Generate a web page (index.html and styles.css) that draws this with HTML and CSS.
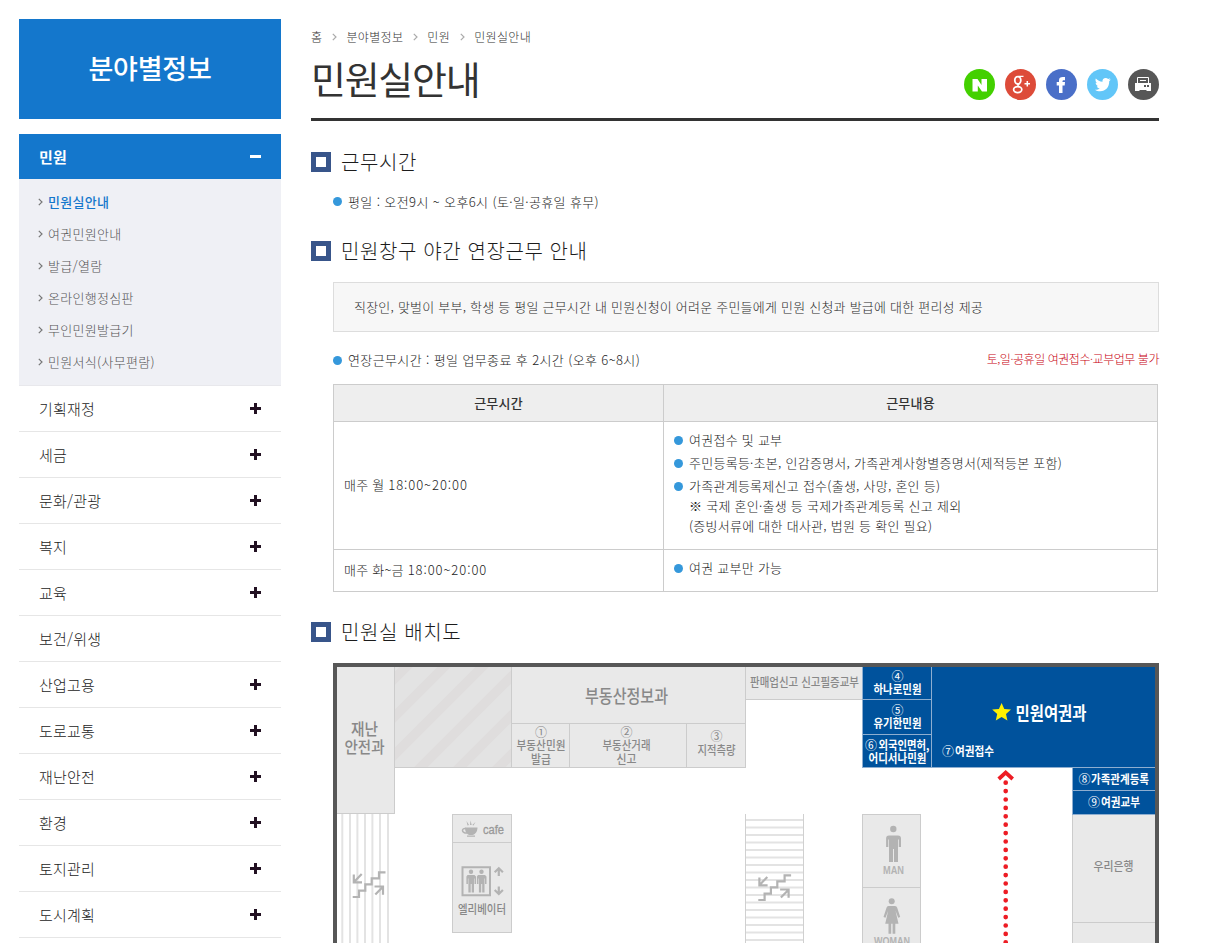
FILE: index.html
```html
<!DOCTYPE html>
<html lang="ko">
<head>
<meta charset="utf-8">
<title>민원실안내</title>
<link rel="stylesheet" href="styles.css">
</head>
<body>
<div class="page">
  <aside class="side">
    <h2 class="side-title">분야별정보</h2>
    <div class="side-current"><span>민원</span><i class="sign minus"></i></div>
    <ul class="sub">
      <li class="on"><svg class="chev" viewBox="0 0 5 8"><path d="M.8 .8L4 4 .8 7.2"/></svg>민원실안내</li>
      <li><svg class="chev" viewBox="0 0 5 8"><path d="M.8 .8L4 4 .8 7.2"/></svg>여권민원안내</li>
      <li><svg class="chev" viewBox="0 0 5 8"><path d="M.8 .8L4 4 .8 7.2"/></svg>발급/열람</li>
      <li><svg class="chev" viewBox="0 0 5 8"><path d="M.8 .8L4 4 .8 7.2"/></svg>온라인행정심판</li>
      <li><svg class="chev" viewBox="0 0 5 8"><path d="M.8 .8L4 4 .8 7.2"/></svg>무인민원발급기</li>
      <li><svg class="chev" viewBox="0 0 5 8"><path d="M.8 .8L4 4 .8 7.2"/></svg>민원서식(사무편람)</li>
    </ul>
    <ul class="menu">
      <li><span>기획재정</span><i class="sign plus"></i></li>
      <li><span>세금</span><i class="sign plus"></i></li>
      <li><span>문화/관광</span><i class="sign plus"></i></li>
      <li><span>복지</span><i class="sign plus"></i></li>
      <li><span>교육</span><i class="sign plus"></i></li>
      <li><span>보건/위생</span></li>
      <li><span>산업고용</span><i class="sign plus"></i></li>
      <li><span>도로교통</span><i class="sign plus"></i></li>
      <li><span>재난안전</span><i class="sign plus"></i></li>
      <li><span>환경</span><i class="sign plus"></i></li>
      <li><span>토지관리</span><i class="sign plus"></i></li>
      <li><span>도시계획</span><i class="sign plus"></i></li>
    </ul>
  </aside>

  <main class="main">
    <nav class="crumbs">
      <span>홈</span><svg class="sep" viewBox="0 0 5 8"><path d="M.8 .8L4 4 .8 7.2"/></svg>
      <span>분야별정보</span><svg class="sep" viewBox="0 0 5 8"><path d="M.8 .8L4 4 .8 7.2"/></svg>
      <span>민원</span><svg class="sep" viewBox="0 0 5 8"><path d="M.8 .8L4 4 .8 7.2"/></svg>
      <span>민원실안내</span>
    </nav>
    <header class="head">
      <h1>민원실안내</h1>
      <div class="share">
        <svg viewBox="0 0 31 31"><circle cx="15.500" cy="15.500" r="15.500" fill="#43d000"/><path fill="#fff" d="M8.500 10h5l4 6V10h5.500v12.500h-5l-4.200-6v6H8.500z"/></svg>
        <svg viewBox="0 0 31 31"><circle cx="15.500" cy="15.500" r="15.500" fill="#dd4b39"/><g fill="none" stroke="#fff"><ellipse cx="12.800" cy="11.300" rx="3" ry="3.700" stroke-width="1.800"/><path stroke-width="1.300" d="M13.500 7.400h5M14.500 14.800c-2.500 1.200-2 2.100 0 3"/><ellipse cx="12.700" cy="20.600" rx="4.100" ry="3" stroke-width="1.700"/><path stroke-width="1.500" d="M22.300 12v5.500M19.500 14.800h5.500"/></g></svg>
        <svg viewBox="0 0 31 31"><circle cx="15.500" cy="15.500" r="15.500" fill="#4a6fc8"/><path fill="#fff" d="M13 24v-7.500h-2.300V13H13v-1.600C13 9 14.400 8 16.800 8H19v3.200h-1.300c-.8 0-1.200.4-1.200 1.100V13H19l-.3 3.500h-2.200V24z"/></svg>
        <svg viewBox="0 0 31 31"><circle cx="15.500" cy="15.500" r="15.500" fill="#62c6f8"/><path fill="#fff" d="M8.800 9.500c1.900 2.100 4 3.100 6.700 3.300-.4-2.500 1.200-3.800 3.200-3.800 1 0 1.800.4 2.400 1l2.200-.8-1.300 1.800 1.900-.4-1.700 1.700c.2 5.700-3.600 10-8.900 10-2.200 0-3.900-.5-5.300-1.500 2 .1 3.400-.3 4.800-1.300-1.600-.2-2.500-1-3-2.300h1.400c-1.600-.6-2.500-1.800-2.600-3.400l1.500.4c-1.500-1.200-2-2.900-1.300-4.700z"/></svg>
        <svg viewBox="0 0 31 31"><circle cx="15.500" cy="15.500" r="15.500" fill="#575757"/><path fill="none" stroke="#fff" stroke-width="1" d="M9.500 14V8.500h11V14M12 11.500h6"/><path fill="#fff" d="M7 14h16v8h-4l-1-1h-6l-1 1H7z"/><path fill="#575757" d="M16 16h2v2h-2zM19 16h2v2h-2z"/></svg>
      </div>
    </header>

    <h3>근무시간</h3>
    <p class="dot line wide">평일 : 오전9시 ~ 오후6시 (토·일·공휴일 휴무)</p>

    <h3 class="second">민원창구 야간 연장근무 안내</h3>
    <div class="notice">직장인, 맞벌이 부부, 학생 등 평일 근무시간 내 민원신청이 어려운 주민들에게 민원 신청과 발급에 대한 편리성 제공</div>
    <div class="row">
      <p class="dot wide">연장근무시간 : 평일 업무종료 후 2시간 (오후 6~8시)</p>
      <p class="warn">토,일·공휴일 여권접수·교부업무 불가</p>
    </div>
    <table>
      <thead><tr><th class="when">근무시간</th><th>근무내용</th></tr></thead>
      <tbody>
        <tr class="tall"><td>매주 월 <span class="hours">18:00~20:00</span></td><td>
          <ul class="work">
            <li class="dot a">여권접수 및 교부</li>
            <li class="dot b">주민등록등·초본, 인감증명서, 가족관계사항별증명서(제적등본 포함)</li>
            <li class="dot c">가족관계등록제신고 접수(출생, 사망, 혼인 등)<br>※ 국제 혼인·출생 등 국제가족관계등록 신고 제외<br>(증빙서류에 대한 대사관, 법원 등 확인 필요)</li>
          </ul></td></tr>
        <tr class="short"><td>매주 화~금 <span class="hours">18:00~20:00</span></td><td><ul class="work"><li class="dot">여권 교부만 가능</li></ul></td></tr>
      </tbody>
    </table>

    <h3 class="third">민원실 배치도</h3>
    <svg class="map" viewBox="333 663 826 280">
      <defs>
        <clipPath id="hatch"><rect x="395" y="667" width="116" height="100"/></clipPath>
        <g id="stairs" fill="none" stroke="#b3b3b3" stroke-width="2.200">
          <path d="M352.700 897H359V890.700H365.300V884.300H371.700V878.300H379V872.300H385.500"/>
          <path d="M361.700 874L354.500 881.500M353.800 874.500V882.300H362M375.300 894.500L382.500 887.300M374.500 886.500H383V894.800"/>
        </g>
      </defs>
      <rect class="white" x="333" y="663" width="826" height="290"/>
      <g class="room">
        <rect x="336.500" y="666.500" width="58" height="147"/>
        <rect class="shade" x="394.500" y="666.500" width="117" height="101"/>
      </g>
      <g clip-path="url(#hatch)" stroke="#dfdddd" stroke-width="9.500">
        <path d="M383 690L413 660M383 728L451 660M383 766L489 660M408 780L528 660M447 780L567 660M486 780L606 660"/>
      </g>
      <g class="room">
        <rect x="511.500" y="666.500" width="234" height="57"/>
        <rect x="511.500" y="723.500" width="58" height="44"/>
        <rect x="569.500" y="723.500" width="117" height="44"/>
        <rect x="686.500" y="723.500" width="59" height="44"/>
        <rect x="745.500" y="666.500" width="117" height="33"/>
        <rect x="452.500" y="814.500" width="59" height="28"/>
        <rect x="452.500" y="842.500" width="59" height="90"/>
        <rect x="862.500" y="814.500" width="58" height="73"/>
        <rect x="862.500" y="887.500" width="58" height="73"/>
        <rect x="1072.500" y="814.500" width="83" height="108"/>
        <rect x="1072.500" y="922.500" width="83" height="40"/>
      </g>
      <g class="blue">
        <rect x="862.500" y="666.500" width="69" height="33"/>
        <rect x="862.500" y="699.500" width="69" height="35"/>
        <rect x="862.500" y="734.500" width="69" height="33"/>
        <rect x="931.500" y="666.500" width="224" height="101"/>
        <rect x="1072.500" y="767.500" width="83" height="23"/>
        <rect x="1072.500" y="790.500" width="83" height="24"/>
      </g>
      <path class="wall" d="M335 943V665H1157V943"/>

      <path stroke="#e3e3e3" stroke-width="2" d="M342.300 814V943M350 814V943M357.400 814V943M365 814V943M372.400 814V943M380 814V943M388 814V943"/>
      <path stroke="#e3e3e3" stroke-width="2" d="M746 820H803M746 827.500H803M746 835H803M746 842.500H803M746 850H803M746 857.500H803M746 865H803M746 872.500H803M746 880H803M746 887.500H803M746 895H803M746 902.500H803M746 910H803M746 917.500H803M746 925H803M746 932.500H803M746 940H803"/>
      <path stroke="#d0d0d0" d="M745.500 814V943M803.500 814V943"/>
      <use href="#stairs"/>
      <use href="#stairs" x="405.600" y="3"/>

      <g class="grey big">
        <text x="351" y="735" textLength="27" lengthAdjust="spacingAndGlyphs">재난</text>
        <text x="344.500" y="752.500" textLength="40" lengthAdjust="spacingAndGlyphs">안전과</text>
      </g>
      <text class="grey dept" x="585" y="703" textLength="83" lengthAdjust="spacingAndGlyphs">부동산정보과</text>
      <g class="grey num"><text x="535" y="737">①</text><text x="620.500" y="737">②</text><text x="710.500" y="741">③</text></g>
      <g class="grey small">
        <text x="516.500" y="750" textLength="49" lengthAdjust="spacingAndGlyphs">부동산민원</text>
        <text x="531" y="763.500" textLength="20" lengthAdjust="spacingAndGlyphs">발급</text>
        <text x="602.500" y="750" textLength="48" lengthAdjust="spacingAndGlyphs">부동산거래</text>
        <text x="616.500" y="763.500" textLength="20" lengthAdjust="spacingAndGlyphs">신고</text>
        <text x="697.500" y="754.500" textLength="38" lengthAdjust="spacingAndGlyphs">지적측량</text>
      </g>
      <text class="grey mid" x="750" y="687" textLength="109" lengthAdjust="spacingAndGlyphs">판매업신고 신고필증교부</text>
      <text class="grey small" x="1093.500" y="870.500" textLength="40" lengthAdjust="spacingAndGlyphs">우리은행</text>
      <text class="grey small" x="458" y="914" textLength="48" lengthAdjust="spacingAndGlyphs">엘리베이터</text>
      <text class="latin" x="483" y="834" textLength="21" lengthAdjust="spacingAndGlyphs">cafe</text>
      <text class="latin wc" x="883" y="874" textLength="21" lengthAdjust="spacingAndGlyphs">MAN</text>
      <text class="latin wc" x="874" y="945" textLength="36" lengthAdjust="spacingAndGlyphs">WOMAN</text>

      <g class="white num"><text x="891.500" y="681">④</text><text x="891.500" y="715">⑤</text><text x="865" y="749.500">⑥</text><text x="942" y="755.500">⑦</text><text x="1078.500" y="784">⑧</text><text x="1088" y="806.500">⑨</text></g>
      <g class="white strong">
        <text x="873.500" y="694" textLength="48" lengthAdjust="spacingAndGlyphs">하나로민원</text>
        <text x="873.500" y="728" textLength="48" lengthAdjust="spacingAndGlyphs">유기한민원</text>
        <text x="878.500" y="749.500" textLength="51" lengthAdjust="spacingAndGlyphs">외국인면허,</text>
        <text x="868.500" y="762.500" textLength="58" lengthAdjust="spacingAndGlyphs">어디서나민원</text>
        <text x="955" y="755.500" textLength="39" lengthAdjust="spacingAndGlyphs">여권접수</text>
        <text x="1091" y="784" textLength="58" lengthAdjust="spacingAndGlyphs">가족관계등록</text>
        <text x="1101" y="806.500" textLength="39" lengthAdjust="spacingAndGlyphs">여권교부</text>
      </g>
      <text class="white main-room" x="1015.500" y="719.500" textLength="71" lengthAdjust="spacingAndGlyphs">민원여권과</text>
      <path fill="#fff200" d="M1001.600 703l2.700 6 6.700.6-5 4.500 1.400 6.400-5.800-3.400-5.800 3.400 1.400-6.400-5-4.500 6.700-.6z"/>
      <path fill="none" stroke="#ed1c24" stroke-width="3.800" d="M998.700 779L1005.700 772.500 1012.700 779"/>
      <path fill="none" stroke="#ed1c24" stroke-width="4.700" stroke-linecap="round" stroke-dasharray="0 8.400" d="M1005.700 782.700V950"/>

      <g fill="#b3b3b3">
        <path d="M465 827.500h12.500c0 4.500-2.500 7-5 7.500h-3c-2.500-.5-4.500-3-4.500-7.500zM467 835.500h8v1.200h-8zM466.500 821l2.500 4-1.500.5zM470.500 820.500l1.200 4.500h-1.700zM475.500 822l-2 3.500-1.200-.5z"/>
        <path fill="none" stroke="#b3b3b3" stroke-width="1.500" d="M465.500 828.500c-4-.5-4.500 4.500 1.500 4.500"/>
        <path fill="none" stroke="#b3b3b3" stroke-width="2" d="M462.500 867.300H490V895.300H462.500z"/>
        <circle cx="471" cy="871.800" r="2.200"/><circle cx="481.500" cy="871.800" r="2.200"/>
        <path d="M467.500 875h7l1.500 1.500v7.500h-1.500v-5.500h-.5v14h-2.300v-8.500h-1v8.500h-2.300v-14h-.5v5.500h-1.500v-7.500zM478 875h7l1.500 1.500v7.500H485v-5.500h-.5v14h-2.300v-8.500h-1v8.500h-2.300v-14h-.5v5.500h-1.500v-7.500z"/>
        <path fill="none" stroke="#b3b3b3" stroke-width="2.200" d="M498.800 876v-7M494.700 872.300l4.100-4 4.100 4M498.800 886.500v7M494.700 890l4.100 4 4.100-4"/>
        <circle cx="893.300" cy="829" r="3.200"/>
        <path d="M889 835.500h9q3 0 3 3V847h-2.200v-7.500H898V862h-4v-13h-1V862h-4v-22.500h-.7v7.500h-2.200v-8.500q0-3 2.900-3z"/>
        <circle cx="891.700" cy="901.200" r="3"/>
        <path d="M888.500 906h6.500q1.700 0 2.200 1.700l3 9.300-2 .7-2.700-7 3 13h-3.200v10h-2.700v-10h-1.400v10h-2.700v-10h-3.300l3-13-2.700 7-2-.7 3-9.300q.4-1.700 2-1.700z"/>
      </g>
    </svg>
  </main>
</div>
</body>
</html>
```

FILE: styles.css
```css
*, *::before { box-sizing: border-box; margin: 0; padding: 0; }
html, body { height: 943px; overflow: hidden; }
body {
  background: #fff;
  color: #1c1c1c;
  font-family: "Noto Sans CJK KR", sans-serif;
  font-size: 13px;
  font-weight: 300;
  letter-spacing: .22px;
}
ul { list-style: none; }
i { display: block; }

.page { display: flex; gap: 30px; padding: 19px 0 0 19px; }
.side { flex: none; width: 262px; }
.side-title {
  height: 100px;
  margin-bottom: 15px;
  background: #1477cc;
  color: #fff;
  font-size: 27px;
  font-weight: 500;
  letter-spacing: -.2px;
  line-height: 97px;
  text-align: center;
}
.side-current, .menu li {
  display: flex;
  align-items: center;
  justify-content: space-between;
  padding: 0 20px;
  font-size: 15px;
}
.side-current { height: 45px; background: #1477cc; color: #fff; font-weight: 700; }
.sign { width: 11px; height: 11px; }
.minus { background: linear-gradient(#fff, #fff) center / 11px 3px no-repeat; }
.plus {
  background:
    linear-gradient(#221122, #221122) center / 11px 3px no-repeat,
    linear-gradient(#221122, #221122) center / 3px 11px no-repeat;
}
.sub { height: 207px; padding: 7px 0 0 19px; background: #eff0f5; border-bottom: 1px solid #e8e8ec; }
.sub li { display: flex; align-items: center; gap: 5px; height: 32px; padding-bottom: 2px; color: #555; letter-spacing: .3px; }
.sub .on { color: #1477cc; font-weight: 500; }
.chev, .sep { flex: none; width: 5px; height: 8px; fill: none; stroke: #777; stroke-width: 1.2; }
.sub .chev { margin-top: 1px; }
.menu li { height: 46px; padding-bottom: 1px; border-bottom: 1px solid #e6e6e6; }
.menu .sign { margin-top: 1px; }

.main { flex: none; width: 848px; }
.crumbs { display: flex; align-items: center; height: 34px; color: #333; font-size: 12px; letter-spacing: .35px; }
.sep { margin: 2px 9px 0 10px; stroke: #aaa; }
.head { display: flex; justify-content: space-between; height: 68px; border-bottom: 3px solid #333; }
.head h1 { color: #333; font-size: 38px; font-weight: 400; letter-spacing: -1.3px; line-height: 50px; }
.share { display: flex; gap: 10px; padding-top: 16px; }
.share svg { display: block; width: 31px; height: 31px; }

h3 { display: flex; align-items: center; gap: 10px; height: 30px; margin-top: 26px; padding-bottom: 1px; font-size: 20px; font-weight: 300; letter-spacing: .6px; }
h3::before { content: ""; width: 20px; height: 20px; margin-top: 1px; border: 5px solid #38558a; }
.dot { display: flex; align-items: center; }
.dot::before { content: ""; flex: none; width: 9px; height: 9px; margin-right: 6px; border-radius: 50%; background: #3598db; }
.wide { letter-spacing: .38px; }
.line { height: 20px; margin: 14px 0 0 22px; }
h3.second { margin-top: 25px; }
.notice { height: 50px; margin: 16px 0 0 22px; padding-left: 20px; border: 1px solid #ddd; background: #f7f7f7; color: #2c2c2c; line-height: 47px; }
.row { display: flex; justify-content: space-between; height: 52px; padding-left: 22px; }
.row p { height: 56px; line-height: 56px; }
.row .warn { color: #c80010; font-size: 12px; line-height: 53px; letter-spacing: -.45px; }

table { width: 825px; margin-left: 22px; border-collapse: collapse; table-layout: fixed; }
th, td { border: 1px solid #ccc; }
th { height: 37px; padding-bottom: 2px; background: #eee; color: #333; font-weight: 500; }
.when { width: 330px; }
td { padding: 0 10px 2px; }
.hours { letter-spacing: .95px; }
.tall { height: 128px; }
.short { height: 42px; }
.work li { line-height: 20px; margin-bottom: 3px; letter-spacing: .26px; }
.work .c { display: block; padding-left: 15px; }
.work .c::before { float: left; margin: 6px 0 0 -15px; }
h3.third { margin-top: 25px; }
.map { display: block; width: 826px; height: 280px; margin: 16px 0 0 22px; }

.map text { letter-spacing: 0; }
.white { fill: #fff; }
.room rect { fill: #e9e9e9; stroke: #ccc; }
.room .shade { fill: #e3e3e3; }
.blue rect { fill: #00529c; stroke: #8eaed0; }
.wall { fill: none; stroke: #575757; stroke-width: 4; }
.grey { fill: #888; font-weight: 500; }
.big { font-size: 16px; }
.dept { font-size: 18px; }
.small { font-size: 12px; }
.mid { font-size: 12.5px; }
.num { font-size: 12px; font-weight: 400; }
.strong { font-size: 12px; font-weight: 700; }
.main-room { font-size: 18px; font-weight: 700; }
.latin { fill: #999; font-family: "Liberation Sans", sans-serif; font-size: 12px; stroke: #999; stroke-width: .3; }
.wc { fill: #b3b3b3; font-size: 10px; font-weight: 700; stroke: none; }
```
